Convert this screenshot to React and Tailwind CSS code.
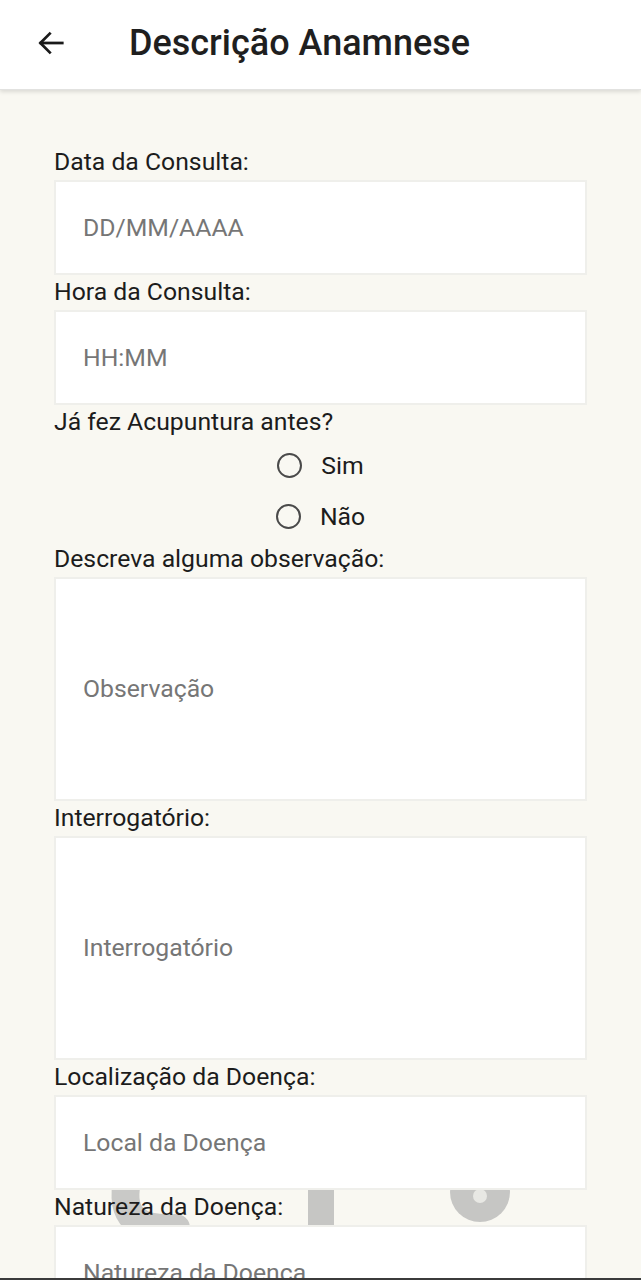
import React from 'react';

const font = { fontFamily: 'Roboto, "Noto Sans", "Liberation Sans", sans-serif' };

function Label({ children }) {
  return (
    <div className="h-[35px] flex items-center text-[24.75px] text-[#1c1c1c] leading-none">
      {children}
    </div>
  );
}

function Field({ placeholder, tall }) {
  return (
    <div
      className={`relative z-10 bg-white border-2 border-[#efefeb] flex items-center pl-[27px] text-[24.75px] text-[#767676] ${
        tall ? 'h-[224px]' : 'h-[95px]'
      }`}
    >
      {placeholder}
    </div>
  );
}

function Radio({ label }) {
  return (
    <div className="h-[51px] flex items-center justify-center gap-[19px]">
      <span className="w-[25px] h-[25px] rounded-full border-[2.5px] border-[#4a4a4a]" />
      <span className="text-[24.75px] text-[#1c1c1c]">{label}</span>
    </div>
  );
}

// marca d'água do fundo (aparece só entre os campos)
function Watermark() {
  return (
    <svg className="absolute left-0 top-[1140px] z-0" width="641" height="140" viewBox="0 0 641 140">
      <path d="M128 36 C 118 78, 138 90, 176 88" fill="none" stroke="#c9c9c7" strokeWidth="28" strokeLinecap="round" />
      <rect x="308" y="30" width="26" height="110" fill="#c6c6c4" />
      <circle cx="480" cy="52" r="30" fill="#c6c6c4" />
      <circle cx="480" cy="56" r="7" fill="#e8e8e4" />
    </svg>
  );
}

export default function App() {
  return (
    <div className="relative h-[1280px] overflow-hidden bg-[#f9f8f2]" style={font}>
      <header className="relative z-20 h-[90px] bg-white flex items-center pb-[4px] shadow-[0_2px_4px_rgba(0,0,0,0.12)] border-b border-[#e2e2e0]">
        <svg className="ml-[36px]" width="30" height="30" viewBox="0 0 24 24" fill="none" stroke="#1a1a1a" strokeWidth="2.2" strokeLinecap="square">
          <path d="M21 12H4" />
          <path d="M11 4.5L3.5 12L11 19.5" />
        </svg>
        <h1 className="ml-[63px] text-[36px] font-medium text-[#1f1f1f]">Descrição Anamnese</h1>
      </header>

      <Watermark />

      <main className="relative z-10 px-[54px] pt-[55px] w-[641px]">
        <div className="w-[533px]">
          <Label>Data da Consulta:</Label>
          <Field placeholder="DD/MM/AAAA" />
          <Label>Hora da Consulta:</Label>
          <Field placeholder="HH:MM" />
          <Label>Já fez Acupuntura antes?</Label>
          <Radio label="Sim" />
          <Radio label="Não" />
          <Label>Descreva alguma observação:</Label>
          <Field placeholder="Observação" tall />
          <Label>Interrogatório:</Label>
          <Field placeholder="Interrogatório" tall />
          <Label>Localização da Doença:</Label>
          <Field placeholder="Local da Doença" />
          <Label>Natureza da Doença:</Label>
          <Field placeholder="Natureza da Doença" />
        </div>
      </main>

      <div className="absolute left-0 right-0 bottom-0 h-[2px] bg-[#3b3b3b] z-30" />
    </div>
  );
}
